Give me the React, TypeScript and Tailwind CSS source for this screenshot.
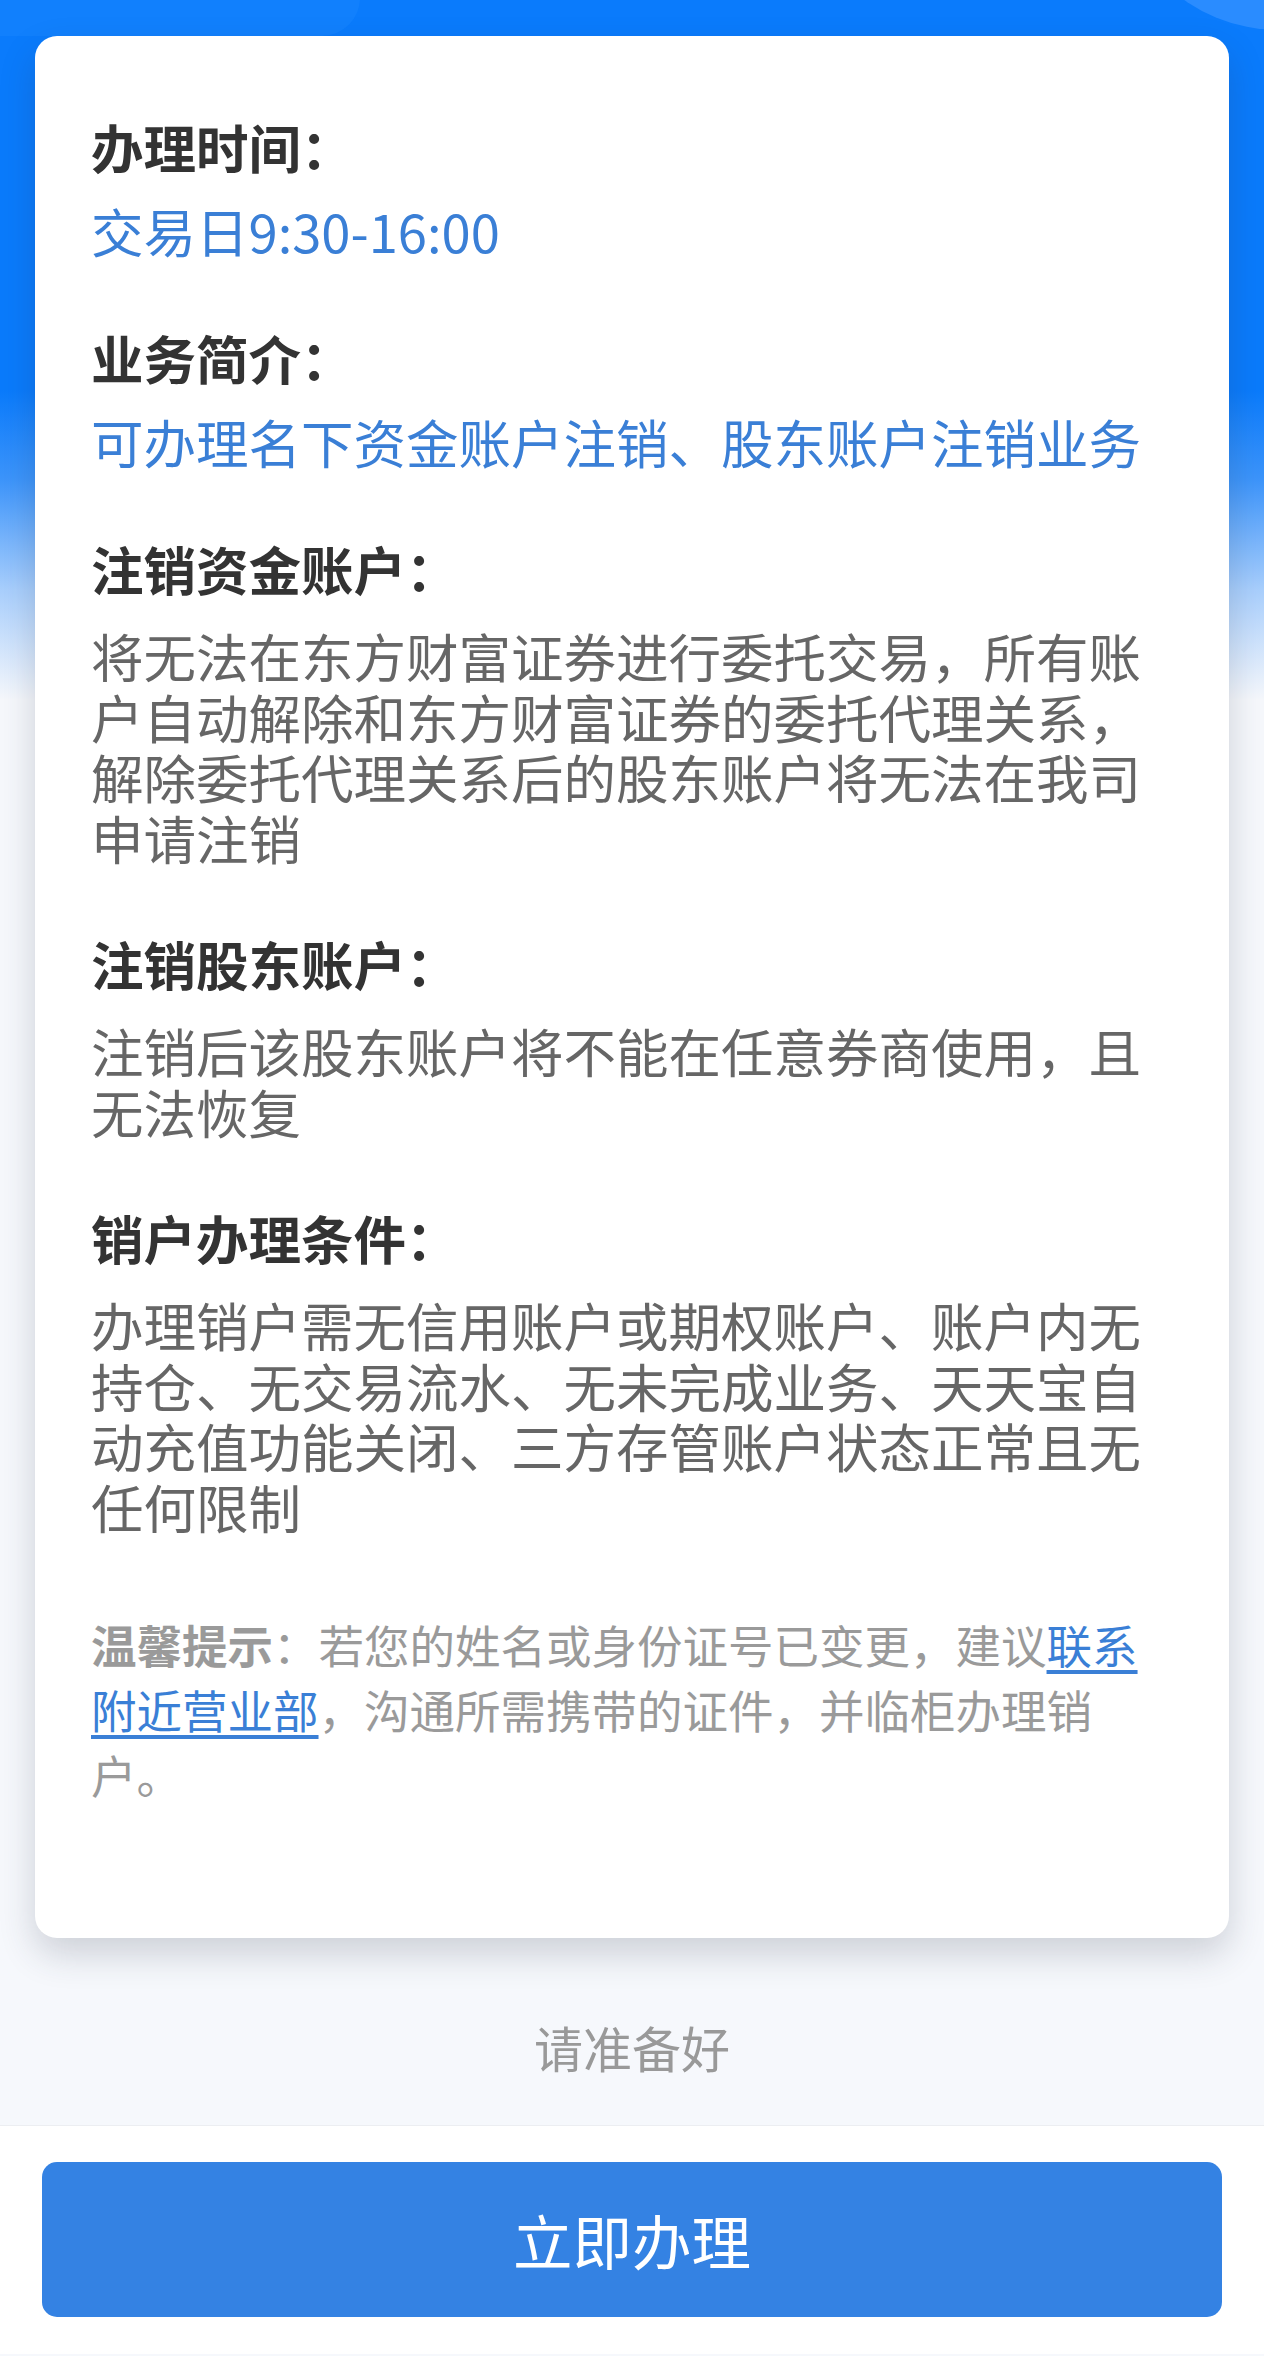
import React from 'react';

const sections = [
  { title: '注销资金账户：', body: '将无法在东方财富证券进行委托交易，所有账户自动解除和东方财富证券的委托代理关系，解除委托代理关系后的股东账户将无法在我司申请注销' },
  { title: '注销股东账户：', body: '注销后该股东账户将不能在任意券商使用，且无法恢复' },
  { title: '销户办理条件：', body: '办理销户需无信用账户或期权账户、账户内无持仓、无交易流水、无未完成业务、天天宝自动充值功能关闭、三方存管账户状态正常且无任何限制' },
];

export default function App() {
  return (
    <div
      className="relative min-h-[2356px] w-full overflow-hidden bg-[#f6f8fc]"
      style={{ fontFamily: '"Noto Sans CJK SC", "Noto Sans", sans-serif' }}
    >
      {/* blue header background */}
      <div className="absolute inset-x-0 top-0 h-[720px] bg-[linear-gradient(180deg,#0a7bfc_0px,#0a7bfc_390px,#3d95fb_480px,#a9cffd_590px,#f6f8fc_700px)]" />
      <div className="absolute right-[-180px] top-[-300px] h-[330px] w-[330px] rounded-full bg-[#2a8cff]" />
      <div className="absolute left-[-200px] top-[-40px] h-[76px] w-[560px] rounded-full bg-[#1683fd] opacity-60" />

      <div className="relative flex flex-col">
        {/* card */}
        <div className="mx-[35px] mt-[36px] rounded-[22px] bg-white px-[56px] pb-[131px] pt-[80px] shadow-[0_16px_36px_rgba(40,50,70,0.2)]">
          <h2 className="text-[52.5px] font-bold leading-[61px] text-[#333333]">办理时间：</h2>
          <p className="mt-[23px] text-[52.5px] leading-[61px] text-[#3a7fd6]">交易日9:30-16:00</p>

          <h2 className="mt-[66px] text-[52.5px] font-bold leading-[61px] text-[#333333]">业务简介：</h2>
          <p className="mt-[23px] text-[52.5px] leading-[61px] text-[#3a7fd6]">可办理名下资金账户注销、股东账户注销业务</p>

          {sections.map((s) => (
            <div key={s.title}>
              <h2 className="mt-[66px] text-[52.5px] font-bold leading-[61px] text-[#333333]">{s.title}</h2>
              <p className="mt-[26px] text-[52.5px] leading-[60.5px] text-[#666666]">{s.body}</p>
            </div>
          ))}

          <p className="mt-[76px] text-[45.5px] leading-[65px] text-[#9a9a9a]">
            <span className="font-bold">温馨提示</span>：若您的姓名或身份证号已变更，建议
            <a className="text-[#3a7fd6] underline underline-offset-[6px]">联系附近营业部</a>
            ，沟通所需携带的证件，并临柜办理销户。
          </p>
        </div>

        {/* hint */}
        <div className="mt-[74px] mb-[43px] text-center text-[49px] leading-[70px] text-[#999999]">请准备好</div>

        {/* footer */}
        <div className="border-t border-[#eceef2] bg-white px-[42px] pb-[37px] pt-[36px]">
          <button className="flex h-[155px] w-full items-center justify-center rounded-[15px] bg-[#3482e3] text-[59.5px] text-white">
            立即办理
          </button>
        </div>
      </div>
    </div>
  );
}
